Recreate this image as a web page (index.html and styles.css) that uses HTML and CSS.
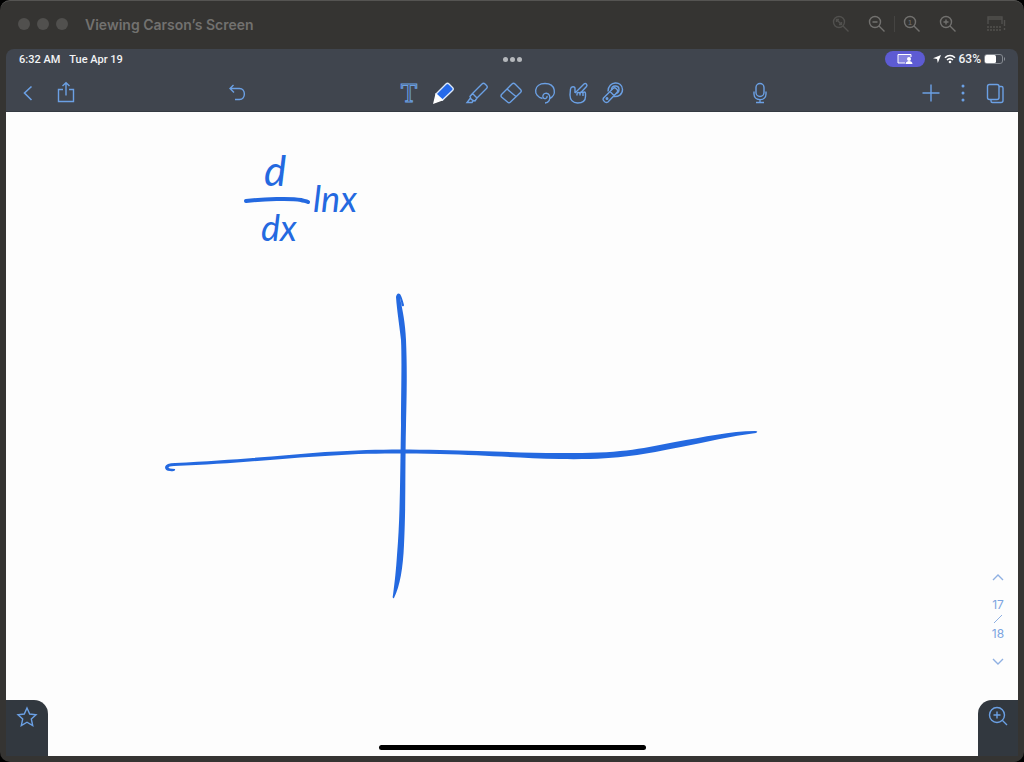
FILE: index.html
```
<!DOCTYPE html>
<html lang="en">
<head>
  <meta charset="utf-8">
  <title>Viewing Carson's Screen</title>
  <link rel="stylesheet" href="styles.css">
</head>
<body>
  <div class="window">
    <header class="titlebar">
      <span class="light"></span>
      <span class="light"></span>
      <span class="light"></span>
      <h1>Viewing Carson’s Screen</h1>
      <div class="zoom-tools">
        <button class="dim" aria-label="Zoom to fit"><svg width="18" height="18" viewBox="0 0 18 18"><circle cx="7" cy="7" r="5.5"/><path d="M11 11l5.500 5.500M4.500 4.500l5 5M4.500 7V4.500H7M9.500 7v2.500H7"/></svg></button>
        <button aria-label="Zoom out"><svg width="18" height="18" viewBox="0 0 18 18"><circle cx="7" cy="7" r="5.5"/><path d="M11 11l5.500 5.500M4.500 7h5"/></svg></button>
        <span class="divider"></span>
        <button aria-label="Actual size"><svg width="18" height="18" viewBox="0 0 18 18"><circle cx="7" cy="7" r="5.5"/><path d="M11 11l5.500 5.500"/><text x="7" y="10" class="one">1</text></svg></button>
        <button aria-label="Zoom in"><svg width="18" height="18" viewBox="0 0 18 18"><circle cx="7" cy="7" r="5.5"/><path d="M11 11l5.500 5.500M4.500 7h5M7 4.500v5"/></svg></button>
        <button class="dim last" aria-label="Show toolbar"><svg width="20" height="18" viewBox="0 0 20 18"><path d="M2 9V2h14v7M2 4h14" /><path d="M1 12h14M1 15h14" stroke-dasharray="2 1"/><path d="M18.500 5v6M18.500 13v2"/></svg></button>
      </div>
    </header>

    <div class="app">
      <div class="status">
        <div class="clock"><span>6:32 AM</span><span>Tue Apr 19</span></div>
        <div class="dots"><i></i><i></i><i></i></div>
        <div class="indicators">
          <span class="sharing"><svg width="16" height="12" viewBox="0 0 16 12"><path d="M8 10H1V1.500h13V4" fill="#8583e0" stroke="#fff"/><circle cx="12" cy="6" r="2" fill="#fff"/><path d="M8.500 11c0-4 7-4 7 0z" fill="#fff"/></svg></span>
          <svg width="8" height="8" viewBox="0 0 8 8"><path d="M8 0L4.800 8 4 4 0 3.300z" fill="#fff"/></svg>
          <svg width="12" height="10" viewBox="0 0 12 10"><path d="M1 3.800c3-3 7-3 10 0M3 6c2-1.800 4-1.800 6 0" fill="none" stroke="#fff" stroke-width="1.600"/><circle cx="6" cy="8" r="1.300" fill="#fff"/></svg>
          <span class="battery">63%</span>
          <svg width="22" height="10" viewBox="0 0 22 10"><rect x=".5" y=".5" width="18" height="9" rx="2.500" fill="none" stroke="#868b92"/><rect x="1" y="1" width="11" height="8" rx="1.500" fill="#fff"/><path d="M20.500 3.500v3" stroke="#868b92"/></svg>
        </div>
      </div>

      <nav class="toolbar">
        <div class="group start">
          <button aria-label="Back"><svg width="24" height="24" viewBox="0 0 24 24"><path d="M15.500 5.500L8.500 12l7 7" stroke-width="1.600"/></svg></button>
          <button aria-label="Share"><svg width="24" height="24" viewBox="0 0 24 24"><path d="M9 8.500H4.500V20.500h15V8.500H15M12 14.500V2M8.500 5L12 1.800 15.500 5"/></svg></button>
        </div>
        <div class="spacer">
          <button aria-label="Undo"><svg width="24" height="24" viewBox="0 0 24 24"><path d="M8.500 4L5 7.500l4 4M5 7.500h9.500c6.500 0 6.500 11 0 11H10"/></svg></button>
        </div>
        <div class="group tools">
          <button aria-label="Text"><svg width="24" height="24" viewBox="0 0 24 24"><text x="12" y="21" class="tee">T</text></svg></button>
          <button aria-label="Pen"><svg width="24" height="24" viewBox="0 0 24 24"><path d="M5 13L15 3q1.500-1.500 3 0l3.500 3.500q1.500 1.500 0 3L11.500 19z" fill="#2469ea" stroke="#dce9fa"/><path d="M5 13.500l6 5.500-8 3z" fill="#fff" stroke="#fff"/></svg></button>
          <button aria-label="Highlighter"><svg width="24" height="24" viewBox="0 0 24 24"><path d="M7.500 12.500L17 3q1.500-1.500 3 0l1.500 1.500q1.500 1.500 0 3L12 17zM7.500 12.500L5 15.500l1 2.500 2 1.500 2 .5 2-3M5.500 17L2 21.500h5L8 20"/></svg></button>
          <button aria-label="Eraser"><svg width="24" height="24" viewBox="0 0 24 24"><path d="M2.500 13.500L13 3q1.500-1.500 3 0l5.500 5.500q1.500 1.500 0 3L11.500 21q-1.500 1.500-3 0l-6-5q-1-1 0-2.500zM8 8l9.500 8"/></svg></button>
          <button aria-label="Lasso"><svg width="24" height="24" viewBox="0 0 24 24"><path d="M9.500 17.500C-.5 15 .5 2.500 12 2.500c11 0 12 12 4.500 15"/><path d="M10 16c-1-4 5-5 6.500-1.500s-1 7.500-4.500 7.500M10 16c1 3 4.500 1.500 4-1"/></svg></button>
          <button aria-label="Pointer"><svg width="24" height="24" viewBox="0 0 24 24"><path d="M8 12V7.500C8 5 4 5 3.500 8L3 14c0 5 3 8 7.500 8 6 0 8-3 8-6.500v-3c0-2-2.500-2-2.500 0M8 12l9-9c1.500-1.500 4 .5 2.500 2.500L13 12.500M16 12.500c0-2-3-2-3 0v2M13 13c0-2-3-2-3 0v1.500M16 12.500V15"/></svg></button>
          <button aria-label="Tape"><svg width="24" height="24" viewBox="0 0 24 24"><path d="M7 10.500c0-11 14.500-11 14.500-2 0 5-4 7.500-9 7"/><path d="M10.500 9c0-5.500 7.500-5 7.500-.5 0 2-1 3.500-3 4"/><path d="M2.500 17L12 7.500q1.500-1.500 3 0l1 1q1.500 1.500 0 3L7 21q-1.500 1-3 0L2.500 19.500q-1-1 0-2.500zM9 10.500l4.500 4.500"/><circle cx="6" cy="17.500" r=".8"/></svg></button>
        </div>
        <div class="spacer">
          <button aria-label="Record"><svg width="24" height="24" viewBox="0 0 24 24"><rect x="8" y="2.500" width="8" height="13" rx="4"/><path d="M6 10.500v2.500c0 7.500 12 7.500 12 0v-2.500M12 18.500v3M8 21.500h8"/></svg></button>
        </div>
        <div class="group end">
          <button aria-label="Add"><svg width="24" height="24" viewBox="0 0 24 24"><path d="M12 3.500v17M3.500 12h17"/></svg></button>
          <button aria-label="More"><svg width="24" height="24" viewBox="0 0 24 24"><g fill="#6ba0e4" stroke="none"><circle cx="12" cy="5" r="1.500"/><circle cx="12" cy="12" r="1.500"/><circle cx="12" cy="19" r="1.500"/></g></svg></button>
          <button aria-label="Pages"><svg width="24" height="24" viewBox="0 0 24 24"><rect x="4.500" y="3.500" width="11.500" height="15" rx="2"/><path d="M8 18.500v1.500q0 1.500 1.500 1.500h8.500q2 0 2-2V7q0-1.500-1.500-1.500H16"/></svg></button>
        </div>
      </nav>

      <main class="page">
        <svg class="ink" width="800" height="500" viewBox="6 112 800 500">
          <text x="264" y="186" class="hand big">d</text>
          <path class="stroke" d="M246 201c18-2 45-3 55-1 3 1 5 1 7 2"/>
          <text x="261" y="241" class="hand">dx</text>
          <text x="313" y="212" class="hand">lnx</text>
          <!-- y axis -->
          <path d="M402 306q2 1 2-1-2-8-4-11-3-2-4 3c1 14 3 25 5 43 1 20 0 55 0 85-1 60-1 95-4 130-1 15-2 25-4 40q-1 4 1 3c6-12 9-30 10-53 2-40 1-75 2-120 1-40 1-60 0-85-1-18-3-28-6-42 1 2 1 5 2 8z"/>
          <!-- x axis -->
          <path d="M175 469q1 3-5 2-5 0-5-4 1-4 10-4c60-3 100-7 150-11 50-3 75-3 115-2 50 1 80 3 120 3 60 1 85-5 115-11 30-5 55-11 80-11q4 0 1 2c-25 3-50 9-75 14-40 8-65 13-121 12-45-1-75-4-120-5-45-1-80-1-115 2-40 2-90 8-151 10-7 0-8 3 1 3z"/>
        </svg>

        <div class="pager">
          <button aria-label="Previous page"><svg width="12" height="8" viewBox="0 0 12 8"><path d="M1 7l5-5 5 5"/></svg></button>
          <div class="count">
            <span>17</span>
            <svg width="12" height="11" viewBox="0 0 12 11"><path d="M2 9l8-8"/></svg>
            <span>18</span>
          </div>
          <button aria-label="Next page"><svg width="12" height="8" viewBox="0 0 12 8"><path d="M1 1l5 5 5-5"/></svg></button>
        </div>

        <button class="corner favorite" aria-label="Favorites"><svg width="22" height="22" viewBox="0 0 22 22"><path d="M11 2l2.700 6 6.300.700-4.700 4.300 1.400 6.500L11 16.200 5.300 19.500 6.700 13 2 8.700 8.300 8z"/></svg></button>
        <button class="corner magnify" aria-label="Zoom window"><svg width="22" height="22" viewBox="0 0 22 22"><circle cx="10" cy="9" r="7.500"/><path d="M15.500 14.500L20 19M10 5.500v7M6.500 9h7"/></svg></button>
        <div class="home-bar"></div>
      </main>
    </div>
  </div>
</body>
</html>
```
FILE: styles.css
```
* {
  box-sizing: border-box;
}
body {
  margin: 0;
  background: #000;
  font-family: Inter, "Liberation Sans", sans-serif;
}
button {
  display: flex;
  align-items: center;
  justify-content: center;
  padding: 0;
  border: none;
  background: none;
  cursor: pointer;
}
svg {
  display: block;
}
button svg {
  overflow: visible;
  fill: none;
  stroke: #6ba0e4;
  stroke-width: 1.4;
}
.window {
  display: flex;
  flex-direction: column;
  min-height: 100vh;
  padding: 0 6px 6px;
  background: #353432;
  border-top: 1px solid #555452;
  border-radius: 10px;
}

/* title bar */
.titlebar {
  display: flex;
  align-items: center;
  gap: 7px;
  height: 48px;
  padding: 0 8px 2px 12px;
}
.light {
  width: 12px;
  height: 12px;
  border-radius: 50%;
  background: #51504e;
}
.titlebar h1 {
  margin: 0 0 0 10px;
  font-size: 14px;
  font-weight: 600;
  color: #72716f;
}
.zoom-tools {
  display: flex;
  align-items: center;
  gap: 8px;
  margin-left: auto;
}
.zoom-tools button {
  width: 28px;
}
.zoom-tools svg {
  stroke: #72716f;
}
.zoom-tools .dim svg {
  stroke: #51504e;
}
.zoom-tools .last {
  margin-left: 12px;
}
.divider {
  width: 1px;
  height: 16px;
  margin: 0 -5px;
  background: #454442;
}
.one {
  font-size: 8px;
  text-anchor: middle;
  fill: #72716f;
  stroke: none;
}

/* ipad screen */
.app {
  display: flex;
  flex: 1;
  flex-direction: column;
  background: #40454e;
  border-radius: 8px 8px 0 0;
}
.status {
  display: grid;
  grid-template-columns: 1fr auto 1fr;
  align-items: center;
  height: 20px;
  padding: 0 12px 0 13px;
  color: #f2f3f5;
  font-family: Roboto, sans-serif;
  font-size: 11px;
  font-weight: 500;
}
.clock {
  display: flex;
  gap: 9px;
}
.dots {
  display: flex;
  gap: 2px;
}
.dots i {
  width: 5px;
  height: 5px;
  border-radius: 50%;
  background: #b5b8bc;
}
.indicators {
  display: flex;
  align-items: center;
  justify-content: flex-end;
  gap: 3px;
}
.sharing {
  display: flex;
  align-items: center;
  justify-content: center;
  width: 40px;
  height: 16px;
  margin-right: 5px;
  border-radius: 8px;
  background: #5d5bd3;
}
.battery {
  font-size: 12px;
}
.toolbar {
  display: grid;
  grid-template-columns: auto 1fr auto 1fr auto;
  align-items: center;
  height: 43px;
  padding: 5px 11px 0 10px;
  border-bottom: 1px solid #353a42;
}
.group {
  display: flex;
}
.start {
  gap: 14px;
  margin-right: 24px;
}
.tools {
  gap: 10px;
}
.end {
  gap: 8px;
}
.spacer {
  display: flex;
  justify-content: center;
  padding-right: 24px;
}
.tee {
  font-family: "DejaVu Serif", serif;
  font-size: 24px;
  text-anchor: middle;
  stroke-width: 1;
}

/* note page */
.page {
  position: relative;
  flex: 1;
  min-height: 620px;
  background: #fdfdfd;
}
.ink {
  position: absolute;
  top: 0;
  left: 0;
  fill: #2469e0;
}
.stroke {
  fill: none;
  stroke: #2469e0;
  stroke-width: 4;
  stroke-linecap: round;
}
.hand {
  font-family: Lato, sans-serif;
  font-size: 36px;
  font-style: italic;
}
.big {
  font-size: 42px;
}
.pager {
  position: absolute;
  right: 8px;
  bottom: 90px;
  display: flex;
  flex-direction: column;
  align-items: center;
  gap: 16px;
  width: 24px;
  color: #7ba4e0;
  font-size: 12px;
  line-height: 16px;
}
.pager svg {
  fill: none;
  stroke: #8fb0e2;
}
.count {
  display: flex;
  flex-direction: column;
  align-items: center;
  gap: 1px;
}
.corner {
  position: absolute;
  bottom: 0;
  align-items: flex-start;
  height: 56px;
  padding-top: 6px;
  background: #32383f;
}
.favorite {
  left: 0;
  width: 42px;
  border-radius: 0 14px 0 0;
}
.magnify {
  right: 0;
  width: 40px;
  border-radius: 14px 0 0 0;
}
.home-bar {
  position: absolute;
  right: 0;
  bottom: 6px;
  left: 0;
  width: 267px;
  height: 5px;
  margin: 0 auto;
  border-radius: 3px;
  background: #000;
}
```
